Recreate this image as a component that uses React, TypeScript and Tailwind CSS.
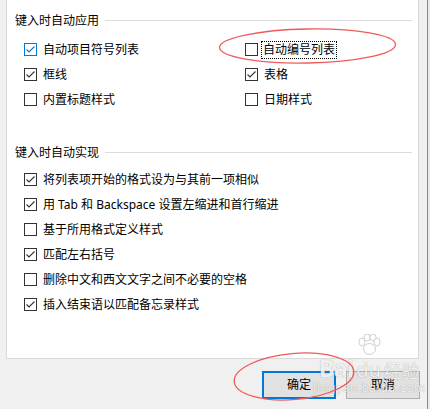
import type { ReactNode } from "react";

type Item = { label: string; checked?: boolean; focus?: boolean; hot?: boolean };

const applyLeft: Item[] = [
  { label: "自动项目符号列表", checked: true, hot: true },
  { label: "框线", checked: true },
  { label: "内置标题样式" },
];

const applyRight: Item[] = [
  { label: "自动编号列表", focus: true },
  { label: "表格", checked: true },
  { label: "日期样式" },
];

const doItems: Item[] = [
  { label: "将列表项开始的格式设为与其前一项相似", checked: true },
  { label: "用 Tab 和 Backspace 设置左缩进和首行缩进", checked: true },
  { label: "基于所用格式定义样式" },
  { label: "匹配左右括号", checked: true },
  { label: "删除中文和西文文字之间不必要的空格" },
  { label: "插入结束语以匹配备忘录样式", checked: true },
];

function CheckBox({ checked, hot }: { checked?: boolean; hot?: boolean }) {
  return (
    <span
      className={`flex items-center justify-center w-[13px] h-[13px] shrink-0 bg-white border ${
        hot ? "border-[#0078d7]" : "border-[#333333]"
      }`}
    >
      {checked && (
        <svg width="11" height="11" viewBox="0 0 11 11">
          <path
            d="M1.5 5.5 L4 8 L9.5 2.5"
            fill="none"
            stroke={hot ? "#0078d7" : "#333333"}
            strokeWidth="1.1"
          />
        </svg>
      )}
    </span>
  );
}

function Row({ item }: { item: Item }) {
  return (
    <div className="flex items-center h-[25px] gap-[6px]">
      <CheckBox checked={item.checked} hot={item.hot} />
      {item.focus ? (
        <span className="-ml-[2px] px-[1px] leading-[16px] outline outline-1 outline-dotted outline-black">
          {item.label}
        </span>
      ) : (
        <span className="leading-[16px]">{item.label}</span>
      )}
    </div>
  );
}

function Heading({ children }: { children: ReactNode }) {
  return (
    <div className="flex items-center h-[17px] pl-[8px] pr-[6px]">
      <span className="leading-[17px] text-black">{children}</span>
      <span className="flex-1 h-px bg-[#dcdcdc] ml-[6px]" />
    </div>
  );
}

export default function App() {
  return (
    <div
      className="relative w-[430px] h-[409px] bg-[#f0f0f0] flex text-[12px] text-black overflow-hidden"
      style={{ fontFamily: '"Noto Sans", "Noto Sans CJK SC", sans-serif' }}
    >
      <div className="w-[427px] flex flex-col">
        <div className="ml-[6px] w-[413px] h-[359px] bg-white border-l border-r border-b border-[#d9d9d9] pt-[12px] flex flex-col">
          <Heading>键入时自动应用</Heading>
          <div className="mt-[8px] pl-[17px] grid grid-cols-[221px_1fr]">
            <div className="flex flex-col">
              {applyLeft.map((it) => (
                <Row key={it.label} item={it} />
              ))}
            </div>
            <div className="flex flex-col">
              {applyRight.map((it) => (
                <Row key={it.label} item={it} />
              ))}
            </div>
          </div>

          <div className="mt-[32px]">
            <Heading>键入时自动实现</Heading>
          </div>
          <div className="mt-[6px] pl-[17px] flex flex-col">
            {doItems.map((it) => (
              <Row key={it.label} item={it} />
            ))}
          </div>
        </div>

        <div className="flex mt-[12px] pl-[262px] gap-[10px]">
          <button className="w-[74px] h-[28px] bg-[#e1e1e1] border-2 border-[#0078d7] text-[12px] text-black">
            确定
          </button>
          <button className="w-[74px] h-[28px] bg-[#e1e1e1] border border-[#adadad] text-[12px] text-black">
            取消
          </button>
        </div>
      </div>
      <div className="w-px h-full bg-[#8c8c8c]" />
      <div className="flex-1 h-full bg-[#e8e8e8]" />

      {/* watermark */}
      <div className="absolute left-[313px] top-[334px] flex flex-col items-center text-white/85 pointer-events-none [text-shadow:0_0_1px_rgba(0,0,0,0.4)]">
        <svg width="26" height="22" viewBox="0 0 26 22" className="opacity-75">
          <g fill="#ffffff" stroke="#b0b0b0" strokeWidth="0.8">
            <ellipse cx="6" cy="8" rx="3" ry="4" />
            <ellipse cx="11" cy="3.5" rx="3" ry="3.5" />
            <ellipse cx="17" cy="3.5" rx="3" ry="3.5" />
            <ellipse cx="21" cy="8" rx="3" ry="4" />
            <ellipse cx="13.5" cy="15" rx="6" ry="5.5" />
          </g>
        </svg>
        <div className="flex items-end gap-[3px] leading-none">
          <span className="text-[24px] font-bold tracking-[-1px]">Bai</span>
          <span className="text-[20px]">du</span>
          <span className="text-[18px]">经验</span>
        </div>
        <span className="text-[12px] leading-[15px] tracking-[0.5px]">jingyan.baidu.com</span>
      </div>

      {/* red hand-drawn ellipses */}
      <svg className="absolute left-0 top-0 pointer-events-none" width="430" height="409">
        <ellipse
          cx="307.5"
          cy="46"
          rx="88"
          ry="17"
          fill="none"
          stroke="#ef5a5a"
          strokeWidth="1.3"
          transform="rotate(-1 307.5 46)"
        />
        <ellipse
          cx="294"
          cy="376.5"
          rx="60"
          ry="23"
          fill="none"
          stroke="#ef5a5a"
          strokeWidth="1.3"
          transform="rotate(-5 294 376.5)"
        />
      </svg>
    </div>
  );
}
